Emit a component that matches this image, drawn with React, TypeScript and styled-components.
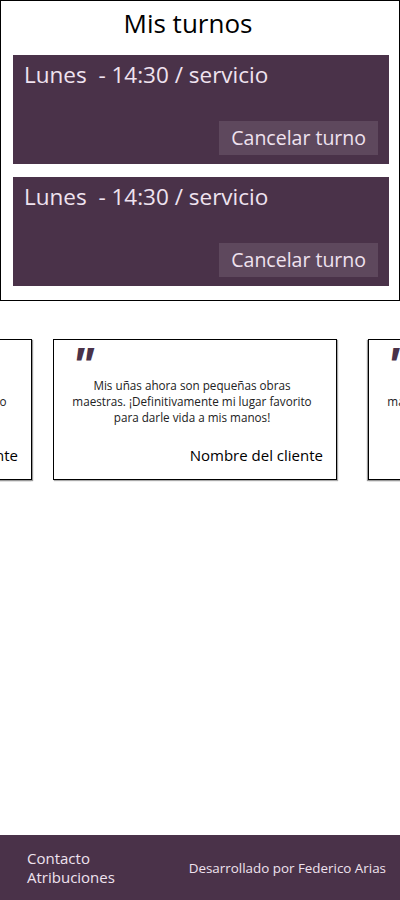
import React from 'react'
import styled, { createGlobalStyle } from 'styled-components'

const GlobalStyle = createGlobalStyle`
    html, body {
        margin: 0px;
        padding: 0px;
        background-color: white;
        font-family: "Open Sans", "Noto Sans", sans-serif;
    }
`

const Page = styled.div`
    min-height: 100vh;
    display: flex;
    flex-direction: column;
    overflow: hidden;
`

const TurnosBox = styled.section`
    border: 1px solid black;
    height: 301px;
    box-sizing: border-box;
    padding: 0px 10px 0px 12px;
    display: flex;
    flex-direction: column;
`
const Title = styled.h1`
    margin: 4px 0px 14px 0px;
    padding-right: 26px;
    font-size: 26px;
    font-weight: 400;
    text-align: center;
    line-height: 36px;
    color: black;
`
const TurnoList = styled.div`
    display: flex;
    flex-direction: column;
    gap: 13px;
`
const TurnoCard = styled.div`
    height: 109px;
    box-sizing: border-box;
    background-color: #4a3249;
    padding: 5px 11px 9px 11px;
    display: flex;
    flex-direction: column;
    justify-content: space-between;
`
const TurnoText = styled.p`
    margin: 0px;
    font-size: 22.5px;
    line-height: 30px;
    color: #efe2ef;
    white-space: pre;
`
const CancelButton = styled.button`
    align-self: flex-end;
    border: none;
    background-color: #5e485d;
    color: #efe2ef;
    font-family: inherit;
    font-size: 19.5px;
    line-height: 28px;
    padding: 3px 12px;
    cursor: pointer;
`

const Carousel = styled.div`
    margin-top: 38px;
    display: flex;
    gap: 21px;
    margin-left: -252px;
`
const Review = styled.div<{ $side?: boolean; $extra?: number }>`
    flex: 0 0 284px;
    height: 141px;
    box-sizing: border-box;
    border: 1px solid black;
    box-shadow: ${p => (p.$side ? '1px 1px 1px #999, -1px 1px 1px #999' : '1px 1px 1px #aaa')};
    margin-left: ${p => p.$extra || 0}px;
    padding: 6px 13px 14px 13px;
    display: flex;
    flex-direction: column;
    background-color: white;
`
const Quote = styled.span`
    display: block;
    height: 14px;
    margin: 2px 0px 0px 5px;
    font-size: 48px;
    line-height: 34px;
    font-style: italic;
    font-weight: 700;
    color: #4a3249;
    overflow: hidden;
`
const ReviewText = styled.p`
    margin: 15px 0px 0px 0px;
    padding-right: 6px;
    font-size: 11.7px;
    line-height: 16px;
    text-align: center;
    color: #222;
`
const ClientName = styled.p`
    margin: auto 0px 0px 0px;
    font-size: 15px;
    line-height: 20px;
    text-align: right;
    color: black;
`

const Footer = styled.footer`
    margin-top: auto;
    height: 65px;
    background-color: #4a3249;
    display: flex;
    align-items: center;
    justify-content: space-between;
    padding: 0px 14px 0px 27px;
`
const FooterLinks = styled.div`
    display: flex;
    flex-direction: column;
`
const FooterLink = styled.a`
    font-size: 15px;
    line-height: 19px;
    color: #efe2ef;
    text-decoration: none;
`
const Credit = styled.p`
    margin: 0px;
    font-size: 13.4px;
    color: #efe2ef;
`

const turnos = ['Lunes  - 14:30 / servicio', 'Lunes  - 14:30 / servicio']
const reviewText = 'Mis uñas ahora son pequeñas obras maestras. ¡Definitivamente mi lugar favorito para darle vida a mis manos!'

const ReviewCard = ({ side, extra }: { side?: boolean; extra?: number }) => (
    <Review $side={side} $extra={extra}>
        <Quote>"</Quote>
        <ReviewText>{reviewText}</ReviewText>
        <ClientName>Nombre del cliente</ClientName>
    </Review>
)

const App = () => {
    return (
        <Page>
            <GlobalStyle />
            <TurnosBox>
                <Title>Mis turnos</Title>
                <TurnoList>
                    {turnos.map((t, i) => (
                        <TurnoCard key={i}>
                            <TurnoText>{t}</TurnoText>
                            <CancelButton>Cancelar turno</CancelButton>
                        </TurnoCard>
                    ))}
                </TurnoList>
            </TurnosBox>

            <Carousel>
                <ReviewCard side />
                <ReviewCard />
                <ReviewCard side extra={10} />
            </Carousel>

            <Footer>
                <FooterLinks>
                    <FooterLink href="#">Contacto</FooterLink>
                    <FooterLink href="#">Atribuciones</FooterLink>
                </FooterLinks>
                <Credit>Desarrollado por Federico Arias</Credit>
            </Footer>
        </Page>
    )
}

export default App
